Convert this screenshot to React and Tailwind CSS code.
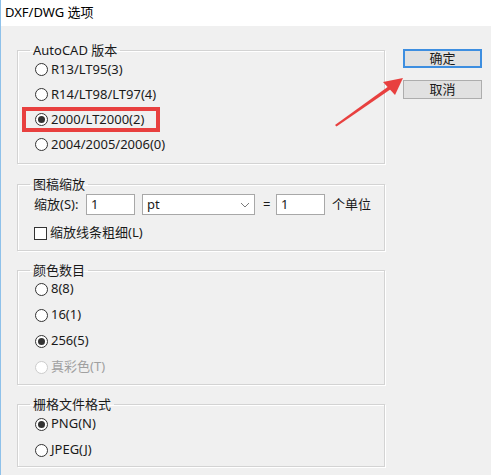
import React from "react";

const font = { fontFamily: '"Noto Sans", "Noto Sans CJK SC", sans-serif' };

function Radio({ label, checked, disabled }) {
  return (
    <div className="flex h-[25px] items-center pl-[17px]">
      <span
        className={`flex h-[13px] w-[13px] items-center justify-center rounded-full border bg-white ${
          disabled ? "border-[#cccccc]" : "border-[#333333]"
        }`}
      >
        {checked && <span className="h-[7px] w-[7px] rounded-full bg-[#333333]" />}
      </span>
      <span className={`ml-[3px] ${disabled ? "text-[#a0a0a0]" : "text-[#1a1a1a]"}`}>{label}</span>
    </div>
  );
}

function Group({ title, children, className = "" }) {
  return (
    <fieldset
      className={`m-0 w-[368px] border border-[#d3d3d3] px-0 shadow-[1px_1px_0_#ffffff,inset_1px_1px_0_#ffffff] ${className}`}
    >
      <legend className="ml-[12px] h-[14px] px-[3px] leading-[14px] text-[#1a1a1a]">{title}</legend>
      {children}
    </fieldset>
  );
}

export default function App() {
  return (
    <div
      className="relative flex h-[475px] w-[491px] flex-col overflow-hidden border-l border-[#8ec1ea] bg-[#f0f0f0] text-[13px]"
      style={font}
    >
      <div className="flex h-[26px] items-center bg-white pl-[4px] text-[#000000]">DXF/DWG 选项</div>

      <div className="flex pt-[17px] pl-[16px]">
        <div className="flex flex-col">
          <Group title="AutoCAD 版本" className="pb-[6px]">
            <Radio label="R13/LT95(3)" />
            <Radio label="R14/LT98/LT97(4)" />
            <Radio label="2000/LT2000(2)" checked />
            <Radio label="2004/2005/2006(0)" />
          </Group>

          <Group title="图稿缩放" className="mt-[13px] pb-[7px]">
            <div className="mt-[3px] flex h-[21px] items-center pl-[16px] text-[#1a1a1a]">
              <span className="w-[52px]">缩放(S):</span>
              <div className="flex h-[21px] w-[49px] items-center border border-[#a8a8a8] bg-white pl-[4px]">1</div>
              <div className="ml-[7px] flex h-[21px] w-[113px] items-center justify-between border border-[#a8a8a8] bg-white pl-[4px] pr-[4px]">
                <span>pt</span>
                <svg width="10" height="6" viewBox="0 0 10 6" fill="none" stroke="#7a7a7a" strokeWidth="1">
                  <path d="M1 1l4 4 4-4" />
                </svg>
              </div>
              <span className="ml-[8px] w-[13px]">=</span>
              <div className="flex h-[21px] w-[49px] items-center border border-[#a8a8a8] bg-white pl-[4px]">1</div>
              <span className="ml-[7px]">个单位</span>
            </div>
            <div className="mt-[8px] flex h-[20px] items-center pl-[16px] text-[#1a1a1a]">
              <span className="h-[13px] w-[13px] border border-[#333333] bg-white" />
              <span className="ml-[3px]">缩放线条粗细(L)</span>
            </div>
          </Group>

          <Group title="颜色数目" className="mt-[12px] pb-[4px]">
            <div className="-mt-[1px] flex flex-col [&>div]:h-[26px]">
              <Radio label="8(8)" />
              <Radio label="16(1)" />
              <Radio label="256(5)" checked />
              <Radio label="真彩色(T)" disabled />
            </div>
          </Group>

          <Group title="栅格文件格式" className="mt-[12px] pb-[3px]">
            <div className="flex flex-col [&>div]:h-[26px]">
              <Radio label="PNG(N)" checked />
              <Radio label="JPEG(J)" />
            </div>
          </Group>
        </div>

        <div className="ml-[18px] flex flex-col pt-[6px]">
          <button className="flex h-[19px] w-[79px] items-center justify-center border-2 border-[#3d8ee0] bg-[#e1e1e1] text-[#1a1a1a]">
            确定
          </button>
          <button className="mt-[12px] flex h-[19px] w-[79px] items-center justify-center border border-[#adadad] bg-[#e1e1e1] text-[#1a1a1a]">
            取消
          </button>
        </div>
      </div>

      {/* red highlight box */}
      <div className="absolute left-[21px] top-[107px] h-[25px] w-[138px] border-[4px] border-[#e8403f]" />

      {/* red arrow */}
      <svg className="absolute left-0 top-0" width="491" height="475" viewBox="0 0 491 475">
        <polygon points="334,125 335.5,126.5 390,89 388,86" fill="#e8403f" />
        <polygon points="402,78 382,82 394,95" fill="#e8403f" />
      </svg>
    </div>
  );
}
